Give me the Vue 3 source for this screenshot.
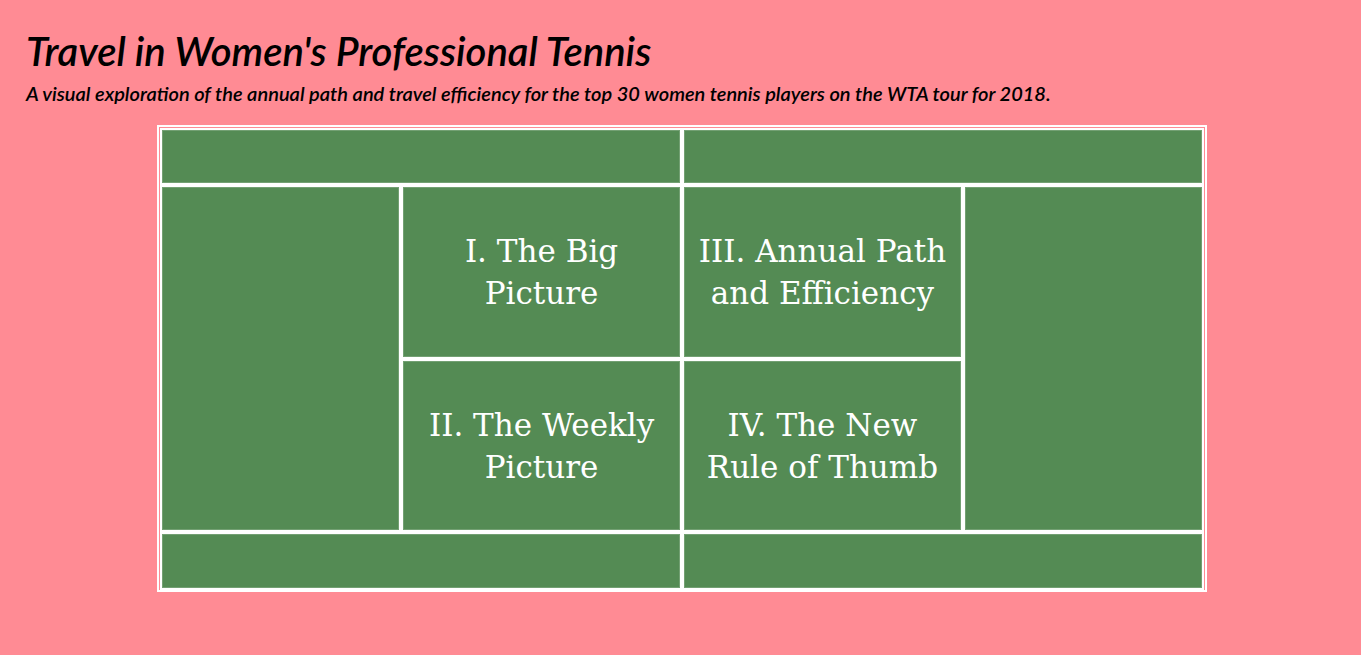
<script setup>
const sections = [
  { id: 'big-picture', area: 'nw', lines: ['I. The Big', 'Picture'] },
  { id: 'annual-path', area: 'ne', lines: ['III. Annual Path', 'and Efficiency'] },
  { id: 'weekly-picture', area: 'sw', lines: ['II. The Weekly', 'Picture'] },
  { id: 'rule-of-thumb', area: 'se', lines: ['IV. The New', 'Rule of Thumb'] }
]
const zones = ['alley-nw', 'alley-ne', 'back-w', 'back-e', 'alley-sw', 'alley-se']
</script>

<template>
  <main class="page">
    <header>
      <h1>Travel in Women's Professional Tennis</h1>
      <p class="subtitle">A visual exploration of the annual path and travel efficiency for the top 30 women tennis players on the WTA tour for 2018.</p>
    </header>
    <nav class="court" aria-label="Sections">
      <div v-for="zone in zones" :key="zone" class="zone" :class="zone"></div>
      <a v-for="s in sections" :key="s.id" class="zone box" :class="s.area" :href="'#' + s.id">
        <span v-for="line in s.lines" :key="line">{{ line }}</span>
      </a>
    </nav>
  </main>
</template>

<style>
body {
  background: #ff8b94;
}
</style>

<style scoped>
.page {
  padding: 26px 23px 26px 26px;
  color: #000;
  font-family: Lato, sans-serif;
  font-style: italic;
}
h1 {
  margin: 0;
  font-size: 40px;
  line-height: 50px;
  font-weight: 600;
}
.subtitle {
  margin: 0;
  font-size: 20px;
  line-height: 34px;
  font-weight: 600;
}
.court {
  display: grid;
  box-sizing: border-box;
  width: 80%;
  margin: 15px auto 0;
  grid-template-columns: 237fr 277fr 277fr 237fr;
  grid-template-rows: 53px minmax(170px, auto) minmax(169px, auto) 54px;
  grid-template-areas:
    'an an bn bn'
    'w nw ne e'
    'w sw se e'
    'as as bs bs';
  gap: 4px;
  background: #fff;
  background-clip: padding-box;
  border: 5px double #fff;
  border-bottom: 4px solid #fff;
}
.zone {
  background: #548b54;
  box-shadow: inset 0 0 0 1px #73a073;
}
.alley-nw { grid-area: an; }
.alley-ne { grid-area: bn; }
.alley-sw { grid-area: as; }
.alley-se { grid-area: bs; }
.back-w { grid-area: w; }
.back-e { grid-area: e; }
.nw { grid-area: nw; }
.ne { grid-area: ne; }
.sw { grid-area: sw; }
.se { grid-area: se; }
.box {
  display: flex;
  flex-direction: column;
  align-items: center;
  justify-content: center;
  color: #fff;
  font: normal 31px/42px "DejaVu Serif", serif;
  text-align: center;
  text-decoration: none;
}
</style>
